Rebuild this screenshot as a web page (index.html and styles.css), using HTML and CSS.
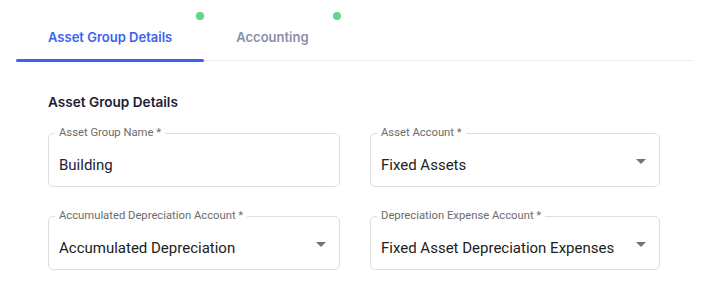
FILE: index.html
```html
<!DOCTYPE html>
<html lang="en">
<head>
  <meta charset="UTF-8" />
  <title>Asset Group</title>
  <link rel="stylesheet" href="styles.css">
</head>
<body>

<div class="page">
  <!-- Tabs -->
  <nav class="tabs">
    <div class="tab active">Asset Group Details<span class="dot"></span></div>
    <div class="tab">Accounting<span class="dot"></span></div>
  </nav>

  <section class="details">
    <h2>Asset Group Details</h2>

    <div class="form">
      <div class="field">
        <label>Asset Group Name *</label>
        <div class="value input">Building</div>
      </div>
      <div class="field">
        <label>Asset Account *</label>
        <div class="value">Fixed Assets</div>
        <span class="arrow"></span>
      </div>
      <div class="field">
        <label>Accumulated Depreciation Account *</label>
        <div class="value">Accumulated Depreciation</div>
        <span class="arrow"></span>
      </div>
      <div class="field">
        <label>Depreciation Expense Account *</label>
        <div class="value">Fixed Asset Depreciation Expenses</div>
        <span class="arrow"></span>
      </div>
    </div>
  </section>
</div>

</body>
</html>
```

FILE: styles.css
```css
body {
  margin: 0;
  background: #fff;
  font-family: 'Roboto', 'Liberation Sans', sans-serif;
  color: #222;
}

.page {
  padding: 0 17px 0 16px;
}

.tabs {
  display: flex;
  border-bottom: 1px solid #ececf3;
}

.tab {
  position: relative;
  padding: 29px 32px 15px;
  font-family: 'Inter', sans-serif;
  font-size: 13px;
  font-weight: 600;
  line-height: 16px;
  color: #8990a6;
}

.tab.active {
  color: #3b62f0;
}

.tab.active::after {
  content: "";
  position: absolute;
  left: 0;
  right: 0;
  bottom: -2px;
  height: 3px;
  border-radius: 2px;
  background: #3b62f0;
}

.dot {
  position: absolute;
  top: 12px;
  right: 0;
  width: 8px;
  height: 8px;
  border-radius: 50%;
  background: #5fd68b;
}

.details {
  padding: 0 33px 0 32px;
}

.details h2 {
  margin: 31px 0 21px;
  font-family: 'Inter', sans-serif;
  font-size: 13.6px;
  font-weight: 600;
  line-height: 20px;
  color: #1c2036;
}

.form {
  display: grid;
  grid-template-columns: 292px 1fr;
  column-gap: 30px;
  row-gap: 29px;
}

.field {
  position: relative;
  height: 52px;
  border: 1px solid #dedede;
  border-radius: 5px;
}

.field label {
  position: absolute;
  top: -8px;
  left: 6px;
  padding: 0 4px;
  background: #fff;
  font-size: 11.25px;
  line-height: 14px;
  color: #6b6b6b;
}

.value {
  padding: 21px 10px 0;
  font-size: 15px;
  line-height: 20px;
  color: #212121;
}

.value.input {
  color: #1c2036;
}

.arrow {
  position: absolute;
  top: 25px;
  right: 13px;
  width: 0;
  height: 0;
  border-left: 5px solid transparent;
  border-right: 5px solid transparent;
  border-top: 5px solid #757575;
}
```
